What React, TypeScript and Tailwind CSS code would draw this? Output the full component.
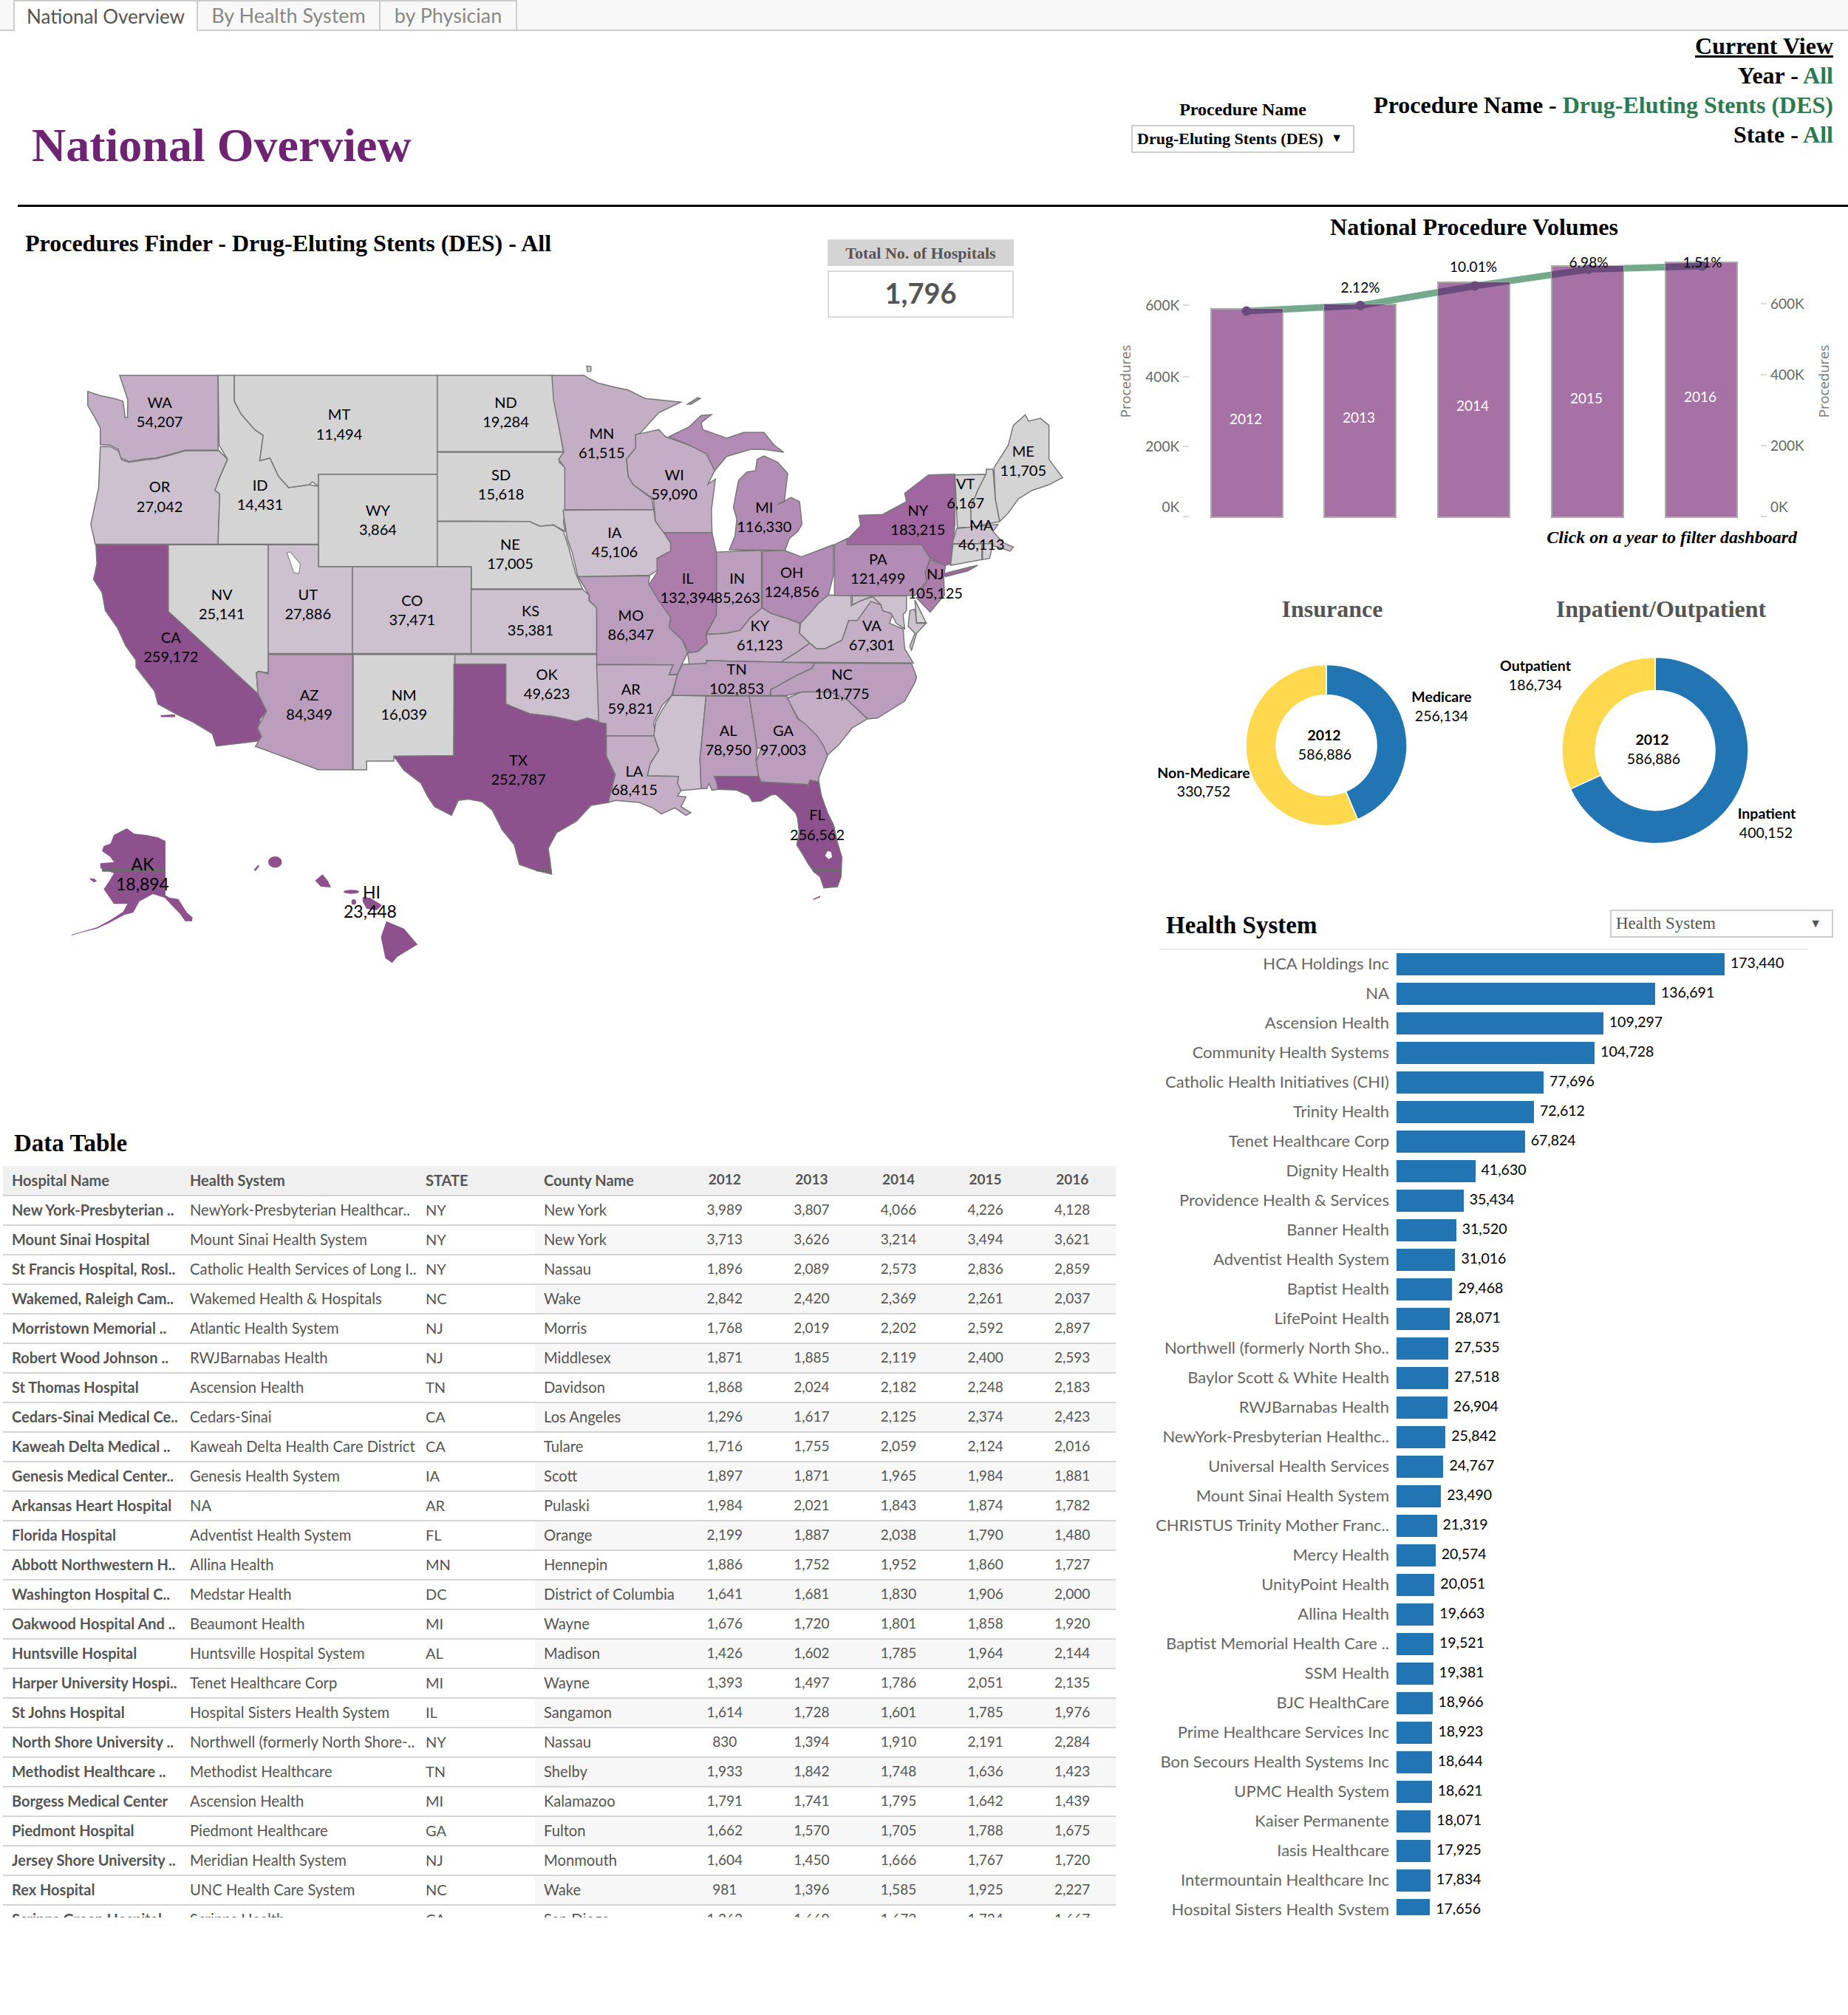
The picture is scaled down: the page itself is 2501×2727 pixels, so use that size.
import React from "react";

const SERIF = "font-['Liberation_Serif',serif]";

const C1 = "#d4d4d4";
const C2 = "#cdc1cf";
const C3 = "#c3aec6";
const C4 = "#bb9dbd";
const C5 = "#b38cb5";
const C6 = "#ac7daa";
const C7 = "#9f669f";
const C8 = "#8d518e";

// outlines are traced from crops of the map, each group has its own scale
const westStates: [string, string][] = [
    [C3, "222,73 512,73 512,338 415,338 380,350 330,365 300,368 250,378 225,365 218,335 195,320 165,318 165,260 150,225 128,180 128,130 165,145 205,155 232,165 238,222 245,222 246,160 235,120"],
    [C2, "165,325 195,325 218,340 228,372 250,380 300,372 330,368 380,352 415,340 515,340 540,370 515,440 503,480 517,492 512,670 150,670 137,600 160,470"],
    [C1, "512,73 560,73 560,165 580,210 620,265 645,285 635,375 665,365 690,430 720,470 780,460 808,465 808,670 512,670 517,492 503,480 515,440 540,370 515,320"],
    [C1, "560,73 1158,73 1158,423 808,423 808,465 790,450 780,460 720,470 690,430 665,365 635,375 645,285 620,265 580,210 560,165"],
    [C1, "808,423 1158,423 1158,750 808,750"],
    [C1, "1158,73 1497,73 1503,150 1530,343 1158,343"],
    [C1, "1158,345 1530,345 1517,380 1535,400 1535,550 1530,590 1535,625 1500,602 1460,607 1430,590 1158,588"],
    [C1, "1158,590 1430,590 1460,607 1500,602 1530,625 1545,680 1565,770 1586,828 1258,828 1258,750 1158,750"],
    [C1, "365,672 660,672 660,1125 630,1120 625,1125 630,1200 365,908"],
    [C8, "152,672 365,672 365,908 630,1200 655,1260 635,1290 640,1365 507,1384 495,1340 440,1300 395,1275 335,1235 325,1190 270,1105 270,1080 240,1030 215,965 180,905 170,840 145,795 155,740"],
    [C2, "660,672 808,672 808,750 908,750 908,1057 660,1057"],
    [C2, "908,750 1258,750 1258,1057 908,1057"],
    [C4, "660,1060 908,1060 908,1468 808,1468 622,1385 640,1350 628,1320 655,1260 630,1200 625,1125 632,1120 660,1128"],
    [C1, "910,1060 1210,1060 1206,1418 1030,1420 1030,1437 950,1437 950,1468 910,1468"],
    [C2, "1258,830 1586,830 1606,850 1605,870 1628,895 1628,1057 1258,1057"],
    [C2, "1210,1060 1628,1060 1636,1180 1656,1305 1600,1285 1568,1297 1500,1280 1430,1270 1390,1250 1360,1235 1360,1095 1210,1095"],
    [C8, "1207,1095 1360,1095 1360,1235 1390,1250 1430,1270 1500,1280 1568,1297 1600,1285 1656,1305 1656,1419 1682,1485 1662,1584 1611,1594 1568,1650 1510,1690 1485,1746 1490,1785 1495,1837 1450,1824 1400,1803 1385,1733 1350,1681 1320,1611 1290,1581 1250,1572 1220,1576 1200,1629 1150,1598 1130,1563 1110,1515 1060,1470 1030,1420 1207,1418"],
];

const eastStates: [string, string][] = [
    [C3, "15,73 110,73 125,85 150,100 200,115 240,125 290,155 395,168 330,205 275,278 262,283 262,330 235,370 240,430 255,460 310,510 315,548 53,548 53,400 35,370 50,345 20,160"],
    [C3, "262,283 280,278 330,265 350,290 420,320 470,350 495,410 475,458 497,440 485,550 487,630 345,630 320,590 315,510 255,460 240,430 235,370 262,330"],
    [C5, "360,290 420,255 455,215 485,212 455,240 460,265 530,295 580,275 640,275 670,320 698,345 640,335 600,335 530,360 495,410 470,350 420,320"],
    [C5, "620,370 640,358 680,380 710,420 700,520 680,530 720,505 745,520 752,600 740,625 715,650 702,692 538,690 555,640 560,580 550,540 565,445 590,415 615,410"],
    [C2, "48,550 315,548 320,590 345,630 365,665 365,695 325,720 330,760 303,780 92,785 75,700 60,650"],
    [C6, "345,630 487,630 500,700 500,920 470,985 473,1020 445,1050 420,1055 400,1010 360,965 365,930 330,870 300,815 325,770 325,720 365,695 365,665"],
    [C4, "500,698 633,692 633,900 600,930 570,975 530,985 470,990 500,920"],
    [C5, "635,695 700,692 750,715 845,672 845,780 830,850 800,880 775,915 748,950 700,930 660,915 635,895"],
    [C4, "92,785 303,782 300,810 330,870 365,930 360,965 400,1010 415,1055 400,1090 385,1130 360,1132 372,1097 147,1095 147,895 125,870 125,850"],
    [C3, "470,990 530,985 570,975 600,930 635,895 660,915 700,930 745,950 745,985 775,1020 740,1050 690,1087 470,1082 470,1092 420,1095 415,1055 445,1050 473,1020"],
    [C4, "400,1095 470,1092 470,1082 790,1090 780,1110 735,1135 690,1165 660,1185 658,1205 370,1205 385,1130"],
    [C4, "790,1090 1075,1092 1090,1140 1085,1160 1055,1225 975,1285 945,1288 885,1220 835,1193 750,1193 708,1205 660,1205 660,1185 690,1165 735,1135 780,1110"],
    [C3, "708,1215 750,1193 835,1193 885,1220 945,1288 900,1320 860,1380 828,1415 800,1360 740,1285"],
    [C3, "147,1097 372,1097 360,1132 385,1132 368,1205 340,1240 315,1300 320,1348 175,1348 175,1305 153,1300"],
    [C2, "748,950 775,915 800,880 830,850 897,852 897,888 925,870 960,855 985,880 950,890 915,940 890,940 870,1010 820,1040 795,1040 775,1020 745,985"],
    [C3, "775,1020 795,1040 820,1040 870,1010 890,940 915,940 955,873 985,885 990,905 1020,915 1010,950 1050,970 1055,1040 1080,1090 690,1087 740,1050"],
    [C2, "900,853 1060,853 1060,905 1050,920 1055,970 1030,950 1015,915 990,905 985,885 960,855 925,870 900,885"],
    [C2, "1085,900 1090,950 1118,950 1090,985 1075,1045 1070,1030 1085,985 1065,960 1070,905"],
    [C1, "1085,868 1118,948 1090,948"],
    [C5, "848,672 885,650 885,672 1105,672 1120,700 1130,720 1115,770 1120,800 1085,852 848,852"],
    [C6, "1130,725 1175,745 1170,790 1172,850 1130,910 1090,860 1120,800 1115,770"],
    [C7, "885,672 885,655 925,605 920,568 990,565 1060,520 1055,490 1125,425 1203,423 1203,600 1190,740 1175,745 1130,720 1105,672"],
    [C7, "1170,775 1250,750 1270,745 1240,765 1175,785"],
    [C1, "1203,425 1295,423 1270,480 1250,540 1250,610 1210,612"],
    [C1, "1295,405 1315,405 1322,510 1335,590 1250,610 1250,540 1270,480 1295,420"],
    [C1, "1318,400 1360,320 1375,250 1410,213 1420,235 1455,225 1480,250 1480,370 1520,435 1480,460 1430,480 1390,510 1360,560 1335,590 1322,510"],
    [C2, "1208,615 1330,600 1315,625 1345,665 1375,680 1365,695 1330,680 1285,668 1195,668"],
    [C1, "1197,670 1282,668 1282,725 1190,745"],
    [C1, "1285,668 1315,668 1305,720 1284,725"],
    [C1, "118,40 130,42 130,58 120,60"],
    [C5, "415,175 445,152 452,155 425,175"],
];

const gulfStates: [string, string][] = [
    [C2, "327,-117 467,-114 442,140 447,262 365,270 350,240 355,212 228,210 240,160 275,105 255,48 262,-10 290,-60"],
    [C4, "467,-114 642,-114 674,96 670,150 680,212 500,212 510,235 515,265 490,268 478,240 470,262 447,262 442,140"],
    [C4, "642,-114 793,-114 837,-24 870,0 920,50 945,90 960,128 925,215 925,235 888,228 880,262 880,245 690,235 680,212 670,150 690,100 674,96"],
    [C3, "62,48 255,48 275,105 240,160 228,210 355,212 350,240 365,270 350,292 385,295 365,335 405,360 385,370 340,340 285,365 250,340 195,318 100,310 70,318 98,205 62,130"],
    [C8, "500,212 680,212 690,235 880,245 880,262 888,228 925,235 935,290 960,360 985,410 1000,480 1018,540 1015,620 1000,660 945,665 930,620 905,600 880,565 860,530 835,490 845,440 838,380 830,360 790,320 750,285 730,288 690,312 655,315 640,290 590,268 515,265 510,235"],
];

const alaskaHawaii = [
    "243,183 265,205 300,210 335,220 357,235 357,455 370,465 395,470 420,525 437,545 435,560 415,560 400,530 375,495 355,465 320,450 300,465 280,480 262,525 235,535 212,552 190,568 155,590 110,606 80,618 80,615 110,603 155,585 195,555 232,522 245,490 205,490 175,430 190,400 205,365 165,345 165,325 205,320 195,300 170,275 175,255 195,245 205,210",
    "132,386 148,388 155,398 145,402",
    "820,370 835,395 845,423 815,420 798,395",
    "938,462 960,465 995,495 980,515 950,510 938,480",
    "1008,560 1060,590 1100,655 1040,705 1025,730 1005,710 992,625",
    "630,332 634,336 622,357 618,350",
];

// [abbr, value, x, y of abbr, y of value] in crop coordinates
const westLabels: [string, string, number, number, number][] = [
    ["WA", "54,207", 340, 170, 238], ["OR", "27,042", 340, 468, 537], ["ID", "14,431", 636, 463, 531],
    ["MT", "11,494", 869, 212, 281], ["ND", "19,284", 1360, 170, 238], ["SD", "15,618", 1346, 426, 495],
    ["WY", "3,864", 983, 552, 620], ["NE", "17,005", 1373, 672, 740], ["NV", "25,141", 523, 850, 918],
    ["UT", "27,886", 777, 850, 918], ["CO", "37,471", 1084, 870, 938], ["KS", "35,381", 1433, 907, 975],
    ["CA", "259,172", 373, 1002, 1070], ["AZ", "84,349", 781, 1205, 1273], ["NM", "16,039", 1060, 1205, 1273],
    ["OK", "49,623", 1481, 1132, 1200], ["TX", "252,787", 1397, 1435, 1503],
];

const eastLabels: [string, string, number, number, number][] = [
    ["MN", "61,515", 162, 280, 348], ["WI", "59,090", 376, 427, 495], ["IA", "45,106", 200, 630, 698],
    ["MI", "116,330", 641, 542, 610], ["IL", "132,394", 415, 793, 860], ["IN", "85,263", 561, 793, 860],
    ["OH", "124,856", 722, 771, 840], ["MO", "86,347", 248, 923, 991], ["KY", "61,123", 628, 960, 1028],
    ["TN", "102,853", 560, 1112, 1180], ["AR", "59,821", 248, 1185, 1252], ["LA", "68,415", 258, 1473, 1540],
    ["AL", "78,950", 535, 1331, 1399], ["GA", "97,003", 697, 1331, 1399], ["NC", "101,775", 870, 1132, 1200],
    ["VA", "67,301", 958, 960, 1028], ["PA", "121,499", 976, 725, 793], ["NY", "183,215", 1094, 552, 620],
    ["VT", "6,167", 1234, 458, 525], ["MA", "46,113", 1281, 604, 672], ["NJ", "105,125", 1145, 775, 845],
    ["ME", "11,705", 1404, 343, 411],
];

const hospitals: string[][] = [
    ["New York-Presbyterian ..", "NewYork-Presbyterian Healthcar..", "NY", "New York", "3,989", "3,807", "4,066", "4,226", "4,128"],
    ["Mount Sinai Hospital", "Mount Sinai Health System", "NY", "New York", "3,713", "3,626", "3,214", "3,494", "3,621"],
    ["St Francis Hospital, Rosl..", "Catholic Health Services of Long I..", "NY", "Nassau", "1,896", "2,089", "2,573", "2,836", "2,859"],
    ["Wakemed, Raleigh Cam..", "Wakemed Health & Hospitals", "NC", "Wake", "2,842", "2,420", "2,369", "2,261", "2,037"],
    ["Morristown Memorial ..", "Atlantic Health System", "NJ", "Morris", "1,768", "2,019", "2,202", "2,592", "2,897"],
    ["Robert Wood Johnson ..", "RWJBarnabas Health", "NJ", "Middlesex", "1,871", "1,885", "2,119", "2,400", "2,593"],
    ["St Thomas Hospital", "Ascension Health", "TN", "Davidson", "1,868", "2,024", "2,182", "2,248", "2,183"],
    ["Cedars-Sinai Medical Ce..", "Cedars-Sinai", "CA", "Los Angeles", "1,296", "1,617", "2,125", "2,374", "2,423"],
    ["Kaweah Delta Medical ..", "Kaweah Delta Health Care District", "CA", "Tulare", "1,716", "1,755", "2,059", "2,124", "2,016"],
    ["Genesis Medical Center..", "Genesis Health System", "IA", "Scott", "1,897", "1,871", "1,965", "1,984", "1,881"],
    ["Arkansas Heart Hospital", "NA", "AR", "Pulaski", "1,984", "2,021", "1,843", "1,874", "1,782"],
    ["Florida Hospital", "Adventist Health System", "FL", "Orange", "2,199", "1,887", "2,038", "1,790", "1,480"],
    ["Abbott Northwestern H..", "Allina Health", "MN", "Hennepin", "1,886", "1,752", "1,952", "1,860", "1,727"],
    ["Washington Hospital C..", "Medstar Health", "DC", "District of Columbia", "1,641", "1,681", "1,830", "1,906", "2,000"],
    ["Oakwood Hospital And ..", "Beaumont Health", "MI", "Wayne", "1,676", "1,720", "1,801", "1,858", "1,920"],
    ["Huntsville Hospital", "Huntsville Hospital System", "AL", "Madison", "1,426", "1,602", "1,785", "1,964", "2,144"],
    ["Harper University Hospi..", "Tenet Healthcare Corp", "MI", "Wayne", "1,393", "1,497", "1,786", "2,051", "2,135"],
    ["St Johns Hospital", "Hospital Sisters Health System", "IL", "Sangamon", "1,614", "1,728", "1,601", "1,785", "1,976"],
    ["North Shore University ..", "Northwell (formerly North Shore-..", "NY", "Nassau", "830", "1,394", "1,910", "2,191", "2,284"],
    ["Methodist Healthcare ..", "Methodist Healthcare", "TN", "Shelby", "1,933", "1,842", "1,748", "1,636", "1,423"],
    ["Borgess Medical Center", "Ascension Health", "MI", "Kalamazoo", "1,791", "1,741", "1,795", "1,642", "1,439"],
    ["Piedmont Hospital", "Piedmont Healthcare", "GA", "Fulton", "1,662", "1,570", "1,705", "1,788", "1,675"],
    ["Jersey Shore University ..", "Meridian Health System", "NJ", "Monmouth", "1,604", "1,450", "1,666", "1,767", "1,720"],
    ["Rex Hospital", "UNC Health Care System", "NC", "Wake", "981", "1,396", "1,585", "1,925", "2,227"],
    ["Scripps Green Hospital", "Scripps Health", "CA", "San Diego", "1,262", "1,660", "1,672", "1,724", "1,667"],
];

const healthSystems: [string, number][] = [
    ["HCA Holdings Inc", 173440], ["NA", 136691], ["Ascension Health", 109297], ["Community Health Systems", 104728],
    ["Catholic Health Initiatives (CHI)", 77696], ["Trinity Health", 72612], ["Tenet Healthcare Corp", 67824],
    ["Dignity Health", 41630], ["Providence Health & Services", 35434], ["Banner Health", 31520],
    ["Adventist Health System", 31016], ["Baptist Health", 29468], ["LifePoint Health", 28071],
    ["Northwell (formerly North Sho..", 27535], ["Baylor Scott & White Health", 27518], ["RWJBarnabas Health", 26904],
    ["NewYork-Presbyterian Healthc..", 25842], ["Universal Health Services", 24767], ["Mount Sinai Health System", 23490],
    ["CHRISTUS Trinity Mother Franc..", 21319], ["Mercy Health", 20574], ["UnityPoint Health", 20051],
    ["Allina Health", 19663], ["Baptist Memorial Health Care ..", 19521], ["SSM Health", 19381],
    ["BJC HealthCare", 18966], ["Prime Healthcare Services Inc", 18923], ["Bon Secours Health Systems Inc", 18644],
    ["UPMC Health System", 18621], ["Kaiser Permanente", 18071], ["Iasis Healthcare", 17925],
    ["Intermountain Healthcare Inc", 17834], ["Hospital Sisters Health System", 17656],
];

const volumeBars = [
    { year: "2012", x: 1639, top: 418, labelY: 567 },
    { year: "2013", x: 1792, top: 412, labelY: 565 },
    { year: "2014", x: 1946, top: 382, labelY: 549 },
    { year: "2015", x: 2100, top: 360, labelY: 539 },
    { year: "2016", x: 2254, top: 355, labelY: 537 },
];

const trend: [number, number][] = [[1687, 421], [1841, 413.5], [1996, 387], [2150, 364.5], [2304, 360]];

function arc(cx: number, cy: number, ro: number, ri: number, from: number, to: number) {
    const p = (r: number, a: number) => `${cx + r * Math.sin(a)} ${cy - r * Math.cos(a)}`;
    const large = to - from > Math.PI ? 1 : 0;
    return `M${p(ro, from)} A${ro} ${ro} 0 ${large} 1 ${p(ro, to)} L${p(ri, to)} A${ri} ${ri} 0 ${large} 0 ${p(ri, from)} Z`;
}

function Donut({ cx, cy, ro, ri, share }: { cx: number; cy: number; ro: number; ri: number; share: number }) {
    const split = share * Math.PI * 2;
    return (
        <g>
            <path d={arc(cx, cy, ro, ri, 0, split)} fill="#2175b2" stroke="#fff" strokeWidth="1.5" />
            <path d={arc(cx, cy, ro, ri, split, Math.PI * 2 - 0.0001)} fill="#ffd84d" stroke="#fff" strokeWidth="1.5" />
        </g>
    );
}

function MapLabels({ items, ox }: { items: [string, string, number, number, number][]; ox: number }) {
    return (
        <>
            {items.map(([abbr, value, x, y1, y2]) => (
                <g key={abbr} textAnchor="middle" fontSize="20" fill="#000">
                    <text x={ox + x * 0.4592} y={480 + y1 * 0.3827 + 7}>{abbr}</text>
                    <text x={ox + x * 0.4592} y={480 + y2 * 0.3827 + 7}>{value}</text>
                </g>
            ))}
        </>
    );
}

function UsMap() {
    return (
        <svg viewBox="60 480 1400 840" className="ml-[60px] h-[840px] w-[1400px] shrink-0">
            <g transform="translate(60 480) scale(0.4592 0.3827)" stroke="#777" strokeWidth="1.5">
                {westStates.map(([fill, pts]) => (
                    <polygon key={pts} points={pts} fill={fill} vectorEffect="non-scaling-stroke" />
                ))}
                <polygon points="715,700 725,698 755,740 750,775 735,770" fill="#fff" stroke="#999" vectorEffect="non-scaling-stroke" />
                <polygon points="342,1275 385,1272 385,1282 345,1282" fill={C8} stroke="none" />
            </g>
            <g transform="translate(740 480) scale(0.4592 0.3827)" stroke="#777" strokeWidth="1.5">
                {eastStates.map(([fill, pts]) => (
                    <polygon key={pts} points={pts} fill={fill} vectorEffect="non-scaling-stroke" />
                ))}
            </g>
            <g transform="translate(800 980) scale(0.3333)" stroke="#777" strokeWidth="1.5">
                {gulfStates.map(([fill, pts]) => (
                    <polygon key={pts} points={pts} fill={fill} vectorEffect="non-scaling-stroke" />
                ))}
                <polygon points="960,515 975,520 978,540 965,548 950,535" fill="#fff" stroke="none" />
                <rect x="900" y="589" width="115" height="10" fill="#6b6b6b" stroke="none" />
                <polygon points="900,710 930,697 930,703 905,713" fill={C8} stroke="none" />
            </g>
            <g transform="translate(60 1060) scale(0.4592 0.3333)" fill={C8}>
                {alaskaHawaii.map((pts) => (
                    <polygon key={pts} points={pts} />
                ))}
                <ellipse cx="680" cy="320" rx="20" ry="23" />
                <ellipse cx="905" cy="441" rx="23" ry="8" />
                <ellipse cx="912" cy="482" rx="7" ry="11" />
                <rect x="170" y="347" width="187" height="12" fill="#6b6b6b" />
                <rect x="1450" y="349" width="45" height="9" fill="#6b6b6b" />
            </g>
            <MapLabels items={westLabels} ox={60} />
            <MapLabels items={eastLabels} ox={740} />
            <g textAnchor="middle" fontSize="23" fill="#000">
                <text x="1106" y="1110" fontSize="20">FL</text>
                <text x="1106" y="1137" fontSize="20">256,562</text>
                <text x="193" y="1178">AK</text>
                <text x="193" y="1205">18,894</text>
                <text x="503" y="1216">HI</text>
                <text x="501" y="1242">23,448</text>
            </g>
        </svg>
    );
}

function VolumeChart() {
    const line = trend.map((p) => p.join(",")).join(" ");
    return (
        <svg viewBox="1510 328 991 384" className="h-[384px] w-[991px] shrink-0">
            <defs>
                <clipPath id="bars">
                    {volumeBars.map((b) => (
                        <rect key={b.year} x={b.x} y={b.top} width="97" height={700 - b.top} />
                    ))}
                </clipPath>
            </defs>
            <g fontSize="19" fill="#666">
                {[["600K", 420, 413], ["400K", 517, 510], ["200K", 611, 604], ["0K", 693, 699]].map(([t, y, tick]) => (
                    <g key={t as string}>
                        <text x="1596" y={y} textAnchor="end">{t}</text>
                        <line x1="1601" x2="1609" y1={tick} y2={tick} stroke="#ccc" strokeWidth="1.5" />
                    </g>
                ))}
                {[["600K", 418, 411], ["400K", 514, 507], ["200K", 610, 603], ["0K", 693, 699]].map(([t, y, tick]) => (
                    <g key={t as string}>
                        <text x="2396" y={y}>{t}</text>
                        <line x1="2383" x2="2391" y1={tick} y2={tick} stroke="#ccc" strokeWidth="1.5" />
                    </g>
                ))}
                <text transform="translate(1530 516) rotate(-90)" textAnchor="middle" fontSize="18.5" fontFamily="Open Sans" fill="#777">Procedures</text>
                <text transform="translate(2475 516) rotate(-90)" textAnchor="middle" fontSize="18.5" fontFamily="Open Sans" fill="#777">Procedures</text>
            </g>
            <polyline points={line} fill="none" stroke="#74a98c" strokeWidth="9" />
            {volumeBars.map((b) => (
                <rect key={b.year} x={b.x} y={b.top} width="97" height={700 - b.top} fill="#a672a6" stroke="#aaa" strokeWidth="2" />
            ))}
            <g clipPath="url(#bars)">
                <polyline points={line} fill="none" stroke="#6a4c7c" strokeWidth="9" />
            </g>
            {trend.map(([x, y]) => (
                <circle key={x} cx={x} cy={y} r="6.5" fill="#6a4c7c" />
            ))}
            {volumeBars.map((b) => (
                <text key={b.year} x={b.x + 47} y={b.labelY + 7} textAnchor="middle" fontSize="19" fill="#fff">{b.year}</text>
            ))}
            <g textAnchor="middle" fontSize="19" fill="#000">
                <text x="1841" y="396">2.12%</text>
                <text x="1994" y="368">10.01%</text>
                <text x="2150" y="362">6.98%</text>
                <text x="2304" y="362">1.51%</text>
            </g>
        </svg>
    );
}

function DonutPanel() {
    return (
        <svg viewBox="1510 845 991 355" className="h-[355px] w-[991px] shrink-0">
            <Donut cx={1795} cy={1008.5} ro={109} ri={68} share={256134 / 586886} />
            <Donut cx={2240} cy={1015.5} ro={126} ri={81} share={400152 / 586886} />
            <g textAnchor="middle" fontSize="19.5" fill="#000">
                <text x="1951" y="950" fontWeight="700">Medicare</text>
                <text x="1951" y="976">256,134</text>
                <text x="1629" y="1053" fontWeight="700">Non-Medicare</text>
                <text x="1629" y="1078">330,752</text>
                <text x="1792" y="1002" fontWeight="700">2012</text>
                <text x="1793" y="1028">586,886</text>
                <text x="2078" y="908" fontWeight="700">Outpatient</text>
                <text x="2078" y="934">186,734</text>
                <text x="2236" y="1008" fontWeight="700">2012</text>
                <text x="2238" y="1034">586,886</text>
                <text x="2391" y="1108" fontWeight="700">Inpatient</text>
                <text x="2390" y="1134">400,152</text>
            </g>
        </svg>
    );
}

function DataTable() {
    return (
        <div className="ml-[4px] mt-[11px] h-[1017px] w-[1506px] overflow-hidden text-[19px] text-[#555]">
            <div className="grid h-[41px] grid-cols-[241px_319px_160px_198px_repeat(5,1fr)] items-center border-b-2 border-[#d4d4d4] bg-[#f0f0f0] pb-[2px] font-bold">
                <div className="pl-[12px] text-[20px]">Hospital Name</div>
                <div className="pl-[12px] text-[20px]">Health System</div>
                <div className="pl-[12px] text-[20px]">STATE</div>
                <div className="pl-[12px] text-[20px]">County Name</div>
                {["2012", "2013", "2014", "2015", "2016"].map((y) => (
                    <div key={y} className="text-center">{y}</div>
                ))}
            </div>
            {hospitals.map((row, i) => {
                const tint = i % 2 === 1 ? "bg-[#f7f7f7]" : "";
                return (
                    <div key={row[0]} className="grid h-[40px] grid-cols-[241px_319px_160px_198px_repeat(5,1fr)] border-b-2 border-[#d4d4d4] leading-[36px]">
                        <div className="truncate pl-[12px] text-[20px] font-bold">{row[0]}</div>
                        <div className="whitespace-nowrap pl-[12px] text-[20.2px]">{row[1]}</div>
                        <div className="pl-[12px] text-[20px]">{row[2]}</div>
                        <div className={`pl-[12px] text-[20.2px] ${tint}`}>{row[3]}</div>
                        {row.slice(4).map((v, j) => (
                            <div key={j} className={`text-center ${tint}`}>{v}</div>
                        ))}
                    </div>
                );
            })}
        </div>
    );
}

function HealthSystems() {
    return (
        <div className="h-[1307px] overflow-hidden">
            {healthSystems.map(([name, value]) => (
                <div key={name} className="flex h-[40px] items-center">
                    <div className="mt-[-4px] w-[380px] shrink-0 whitespace-nowrap pr-[10px] text-right text-[22px] text-[#666]">{name}</div>
                    <div className="h-[30px] bg-[#2175b2]" style={{ width: value * 0.00256 }} />
                    <div className="mt-[-4px] pl-[8px] text-[19.5px] text-black">{value.toLocaleString("en-US")}</div>
                </div>
            ))}
        </div>
    );
}

export default function App() {
    return (
        <div className="h-[2727px] w-[2501px] overflow-hidden bg-white font-['Lato',sans-serif]">
            <div className="flex h-[42px] border-b-2 border-[#ccc] bg-[#f8f8f8] pl-[18px]">
                <div className="flex h-[42px] w-[250px] items-center justify-center border-x-2 border-t-2 border-[#ccc] bg-white text-[26px] text-[#555]">National Overview</div>
                <div className="flex h-[40px] w-[247px] items-center justify-center border-r-2 border-t-2 border-[#ccc] text-[27px] text-[#888]">By Health System</div>
                <div className="flex h-[40px] w-[185px] items-center justify-center border-r-2 border-t-2 border-[#ccc] text-[27px] text-[#888]">by Physician</div>
            </div>

            <div className={`ml-[24px] flex h-[238px] border-b-[3px] border-black ${SERIF} font-bold`}>
                <div className="w-[1507px] shrink-0 pl-[19px] pt-[119px] text-[64px] leading-[72px] text-[#6e2472]">National Overview</div>
                <div className="w-[302px] shrink-0 pt-[91px] text-center">
                    <div className="text-[24px] leading-[30px] text-black">Procedure Name</div>
                    <div className="mt-[6px] flex h-[38px] items-center justify-between border-2 border-[#ccc] pb-[2px] pl-[6px] pr-[14px] text-[22px] text-black">
                        <span>Drug-Eluting Stents (DES)</span>
                        <span className="text-[16px]">▼</span>
                    </div>
                </div>
                <div className="flex-1 pr-[20px] text-right text-[32px] leading-[40px] text-black">
                    <div className="underline">Current View</div>
                    <div>Year - <span className="text-[#2a7a52]">All</span></div>
                    <div className="whitespace-nowrap">Procedure Name - <span className="text-[#2a7a52]">Drug-Eluting Stents (DES)</span></div>
                    <div>State - <span className="text-[#2a7a52]">All</span></div>
                </div>
            </div>

            <div className="flex">
                <div className="w-[1510px] shrink-0">
                    <div className="flex h-[200px]">
                        <div className={`w-[1120px] shrink-0 pl-[34px] pt-[29px] ${SERIF} text-[32px] font-bold leading-[40px] text-black`}>
                            Procedures Finder - Drug-Eluting Stents (DES) - All
                        </div>
                        <div className="mt-[44px] w-[252px] shrink-0">
                            <div className={`flex h-[36px] items-center justify-center bg-[#d4d4d4] ${SERIF} text-[22px] font-bold text-[#555]`}>Total No. of Hospitals</div>
                            <div className="mt-[6px] flex h-[64px] items-center justify-center border-2 border-[#d9d9d9] pb-[3px] text-[38px] font-bold text-[#555]">1,796</div>
                        </div>
                    </div>
                    <UsMap />
                    <div className={`mt-[207px] h-[40px] pl-[19px] ${SERIF} text-[33px] font-bold leading-[40px] text-black`}>Data Table</div>
                    <DataTable />
                </div>

                <div className="flex-1">
                    <div className={`pr-[21px] pt-[7px] text-center ${SERIF} text-[32px] font-bold leading-[40px] text-black`}>National Procedure Volumes</div>
                    <div className="pt-px">
                        <VolumeChart />
                    </div>
                    <div className={`h-[30px] pr-[69px] text-right ${SERIF} text-[24px] font-bold italic leading-[30px] text-black`}>Click on a year to filter dashboard</div>

                    <div className={`mt-[62px] flex h-[41px] ${SERIF} text-[32px] font-bold leading-[40px] text-[#555]`}>
                        <div className="w-[586px] shrink-0 text-center">Insurance</div>
                        <div className="flex-1 pr-[101px] text-center">Inpatient/Outpatient</div>
                    </div>
                    <DonutPanel />

                    <div className="flex h-[84px] items-center pt-[22px]">
                        <div className={`pl-[68px] ${SERIF} text-[33px] font-bold text-black`}>Health System</div>
                        <div className={`ml-auto mr-[20px] mt-[-6px] flex h-[38px] w-[302px] items-center justify-between border-2 border-[#ccc] pl-[6px] pr-[14px] ${SERIF} text-[23px] text-[#555]`}>
                            <span>Health System</span>
                            <span className="text-[16px]">▼</span>
                        </div>
                    </div>
                    <div className="ml-[60px] h-px w-[877px] bg-[#ddd]" />
                    <HealthSystems />
                </div>
            </div>
        </div>
    );
}
